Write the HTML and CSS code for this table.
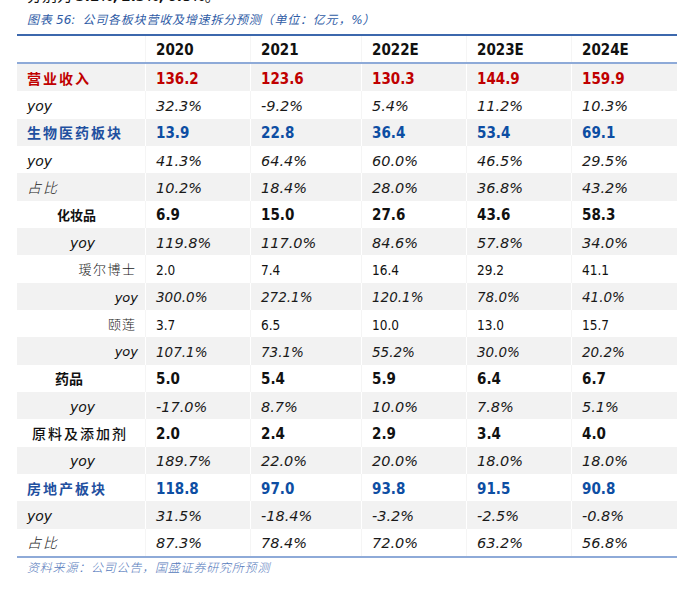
FILE: index.html
```html
<!DOCTYPE html>
<html lang="zh-CN">
<head>
<meta charset="utf-8">
<title>图表 56</title>
<link rel="stylesheet" href="styles.css">
</head>
<body>
<div class="page">
  <div class="lead">分别为 <span class="num">3.2%,</span> <span class="num">2.3%,</span> <span class="num">6.8%</span>。</div>
  <div class="caption">图表 <span class="lat">56:</span>&nbsp; 公司各板块营收及增速拆分预测（单位：亿元，<span class="lat">%</span>）</div>

  <div class="table">
    <div class="row head">
      <div class="c lab"></div>
      <div class="c">2020</div>
      <div class="c">2021</div>
      <div class="c">2022E</div>
      <div class="c">2023E</div>
      <div class="c">2024E</div>
    </div>

    <div class="row g red">
      <div class="c lab cj b l0">营业收入</div>
      <div class="c bn">136.2</div><div class="c bn">123.6</div><div class="c bn">130.3</div><div class="c bn">144.9</div><div class="c bn">159.9</div>
    </div>
    <div class="row w">
      <div class="c lab yoy l0">yoy</div>
      <div class="c it">32.3%</div><div class="c it">-9.2%</div><div class="c it">5.4%</div><div class="c it">11.2%</div><div class="c it">10.3%</div>
    </div>
    <div class="row g blue">
      <div class="c lab cj b l0">生物医药板块</div>
      <div class="c bn">13.9</div><div class="c bn">22.8</div><div class="c bn">36.4</div><div class="c bn">53.4</div><div class="c bn">69.1</div>
    </div>
    <div class="row w">
      <div class="c lab yoy l0">yoy</div>
      <div class="c it">41.3%</div><div class="c it">64.4%</div><div class="c it">60.0%</div><div class="c it">46.5%</div><div class="c it">29.5%</div>
    </div>
    <div class="row g">
      <div class="c lab cj thin ob l0">占比</div>
      <div class="c it">10.2%</div><div class="c it">18.4%</div><div class="c it">28.0%</div><div class="c it">36.8%</div><div class="c it">43.2%</div>
    </div>
    <div class="row w">
      <div class="c lab cj b sm l-cos">化妆品</div>
      <div class="c bn">6.9</div><div class="c bn">15.0</div><div class="c bn">27.6</div><div class="c bn">43.6</div><div class="c bn">58.3</div>
    </div>
    <div class="row g">
      <div class="c lab yoy l-yoy2">yoy</div>
      <div class="c it">119.8%</div><div class="c it">117.0%</div><div class="c it">84.6%</div><div class="c it">57.8%</div><div class="c it">34.0%</div>
    </div>
    <div class="row w">
      <div class="c lab cj thin sub r-sub">瑷尔博士</div>
      <div class="c rn">2.0</div><div class="c rn">7.4</div><div class="c rn">16.4</div><div class="c rn">29.2</div><div class="c rn">41.1</div>
    </div>
    <div class="row g">
      <div class="c lab yoy ys r-yoy">yoy</div>
      <div class="c it is">300.0%</div><div class="c it is">272.1%</div><div class="c it is">120.1%</div><div class="c it is">78.0%</div><div class="c it is">41.0%</div>
    </div>
    <div class="row w">
      <div class="c lab cj thin sub2 r-sub2">颐莲</div>
      <div class="c rn">3.7</div><div class="c rn">6.5</div><div class="c rn">10.0</div><div class="c rn">13.0</div><div class="c rn">15.7</div>
    </div>
    <div class="row g">
      <div class="c lab yoy ys r-yoy">yoy</div>
      <div class="c it is">107.1%</div><div class="c it is">73.1%</div><div class="c it is">55.2%</div><div class="c it is">30.0%</div><div class="c it is">20.2%</div>
    </div>
    <div class="row w">
      <div class="c lab cj b l-drug">药品</div>
      <div class="c bn">5.0</div><div class="c bn">5.4</div><div class="c bn">5.9</div><div class="c bn">6.4</div><div class="c bn">6.7</div>
    </div>
    <div class="row g">
      <div class="c lab yoy l-yoy2">yoy</div>
      <div class="c it">-17.0%</div><div class="c it">8.7%</div><div class="c it">10.0%</div><div class="c it">7.8%</div><div class="c it">5.1%</div>
    </div>
    <div class="row w">
      <div class="c lab cj med l-raw">原料及添加剂</div>
      <div class="c bn">2.0</div><div class="c bn">2.4</div><div class="c bn">2.9</div><div class="c bn">3.4</div><div class="c bn">4.0</div>
    </div>
    <div class="row g">
      <div class="c lab yoy l-yoy2">yoy</div>
      <div class="c it">189.7%</div><div class="c it">22.0%</div><div class="c it">20.0%</div><div class="c it">18.0%</div><div class="c it">18.0%</div>
    </div>
    <div class="row w blue">
      <div class="c lab cj b l0">房地产板块</div>
      <div class="c bn">118.8</div><div class="c bn">97.0</div><div class="c bn">93.8</div><div class="c bn">91.5</div><div class="c bn">90.8</div>
    </div>
    <div class="row g">
      <div class="c lab yoy l0">yoy</div>
      <div class="c it">31.5%</div><div class="c it">-18.4%</div><div class="c it">-3.2%</div><div class="c it">-2.5%</div><div class="c it">-0.8%</div>
    </div>
    <div class="row w last">
      <div class="c lab cj thin ob l0">占比</div>
      <div class="c it">87.3%</div><div class="c it">78.4%</div><div class="c it">72.0%</div><div class="c it">63.2%</div><div class="c it">56.8%</div>
    </div>
  </div>

  <div class="source">资料来源：公司公告，国盛证券研究所预测</div>
</div>
</body>
</html>
```

FILE: styles.css
```css
* { box-sizing: border-box; }

html, body {
  margin: 0;
  padding: 0;
  background: #ffffff;
  overflow: hidden;
}

.page {
  padding-left: 17px;
  width: 686px;
  height: 591px;
}

.lead {
  margin-top: -13px;
  padding-left: 10px;
  height: 16px;
  line-height: 16px;
  font-family: "Noto Sans CJK SC", sans-serif;
  font-size: 15px;
  color: #111;
  white-space: nowrap;
}
.lead .num {
  font-family: "DejaVu Sans Condensed", "DejaVu Sans", sans-serif;
  font-stretch: semi-condensed;
  font-weight: bold;
}

.caption {
  margin-top: 8px;
  padding-left: 10px;
  height: 16px;
  line-height: 16px;
  font-family: "Noto Sans CJK SC", sans-serif;
  font-style: italic;
  font-size: 12px;
  letter-spacing: 0.8px;
  color: #2f5ca6;
  white-space: nowrap;
}
.caption .lat {
  font-family: "DejaVu Sans", sans-serif;
  letter-spacing: 0;
}

.table {
  margin-top: 7px;
  width: 660px;
  border-top: 2px solid #3c68ad;
  border-bottom: 2px solid #8eaad8;
}

.row {
  display: grid;
  grid-template-columns: 128px 105px 111px 105px 105px 106px;
  height: 27.33px;
}
.row.head {
  height: 28px;
  border-bottom: 2px solid #8eaad8;
  font-family: "DejaVu Sans Condensed", "DejaVu Sans", sans-serif;
  font-stretch: semi-condensed;
  font-weight: bold;
  font-size: 15px;
  color: #111;
}
.row.head .c { padding-top: 2px; }

.row.g { background: #f2f2f2; }
.row.w { background: #ffffff; }

.c {
  display: flex;
  align-items: center;
  padding-left: 10px;
  padding-top: 2px;
  white-space: nowrap;
  color: #111;
}
.row.g .c + .c { border-left: 1px solid #ffffff; }
.row.w .c + .c { border-left: 1px solid #f5f5f5; }
.row.head .c + .c { border-left: 1px solid #f5f5f5; }

.lab { padding-left: 0; }

.cj {
  font-family: "Noto Sans CJK SC", sans-serif;
  font-size: 14px;
  letter-spacing: 2px;
  padding-top: 0;
}
.cj.b { font-weight: 700; }
.cj.med { font-weight: 500; }
.cj.thin { font-weight: 300; color: #222; }
.cj.ob { font-style: italic; }
.cj.sm { font-size: 13px; letter-spacing: 0; }
.cj.sub { font-size: 13px; letter-spacing: 1.5px; }
.cj.sub2 { font-size: 13px; letter-spacing: 1px; }

.yoy {
  font-family: "DejaVu Sans", sans-serif;
  font-style: italic;
  font-size: 14px;
  color: #111;
}
.yoy.ys { font-size: 13px; }

.l0 { padding-left: 10px; }
.l-cos { padding-left: 40px; }
.l-yoy2 { padding-left: 53px; }
.l-drug { padding-left: 38px; letter-spacing: 0; }
.l-raw { padding-left: 15px; }
.r-sub { justify-content: flex-end; padding-right: 8.5px; }
.r-sub2 { justify-content: flex-end; padding-right: 9px; }
.r-yoy { justify-content: flex-end; padding-right: 7px; }

.bn {
  font-family: "DejaVu Sans Condensed", "DejaVu Sans", sans-serif;
  font-stretch: semi-condensed;
  font-weight: bold;
  font-size: 15px;
}
.rn {
  font-family: "DejaVu Sans Condensed", "DejaVu Sans", sans-serif;
  font-stretch: semi-condensed;
  font-size: 13.5px;
}
.it {
  font-family: "DejaVu Sans", sans-serif;
  font-style: italic;
  font-size: 14.5px;
  color: #1a1a1a;
}
.it.is { font-size: 13.5px; }

.row.red .c { color: #c00000; }
.row.blue .c { color: #0d4ea3; }
.row.blue .lab { color: #1f50a0; }

.source {
  padding-left: 10px;
  height: 16px;
  line-height: 16px;
  margin-top: 1px;
  font-family: "Noto Sans CJK SC", sans-serif;
  font-style: italic;
  font-weight: 300;
  font-size: 12px;
  letter-spacing: 0.8px;
  color: #5479bb;
  white-space: nowrap;
}
```
